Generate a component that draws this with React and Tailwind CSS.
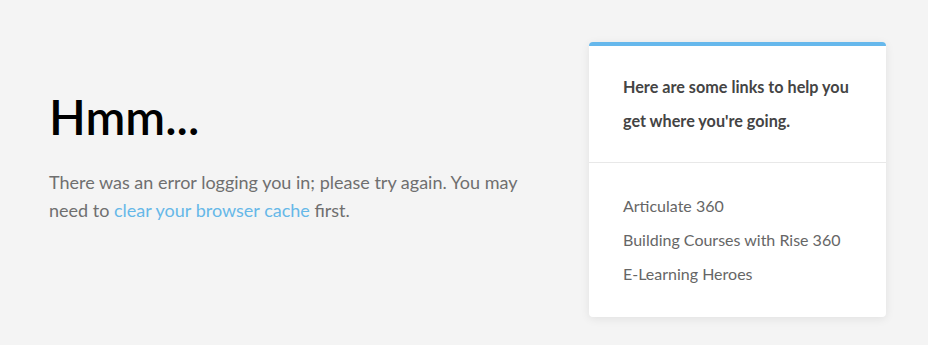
export default function App() {
  return (
    <div className="min-h-[345px] bg-[#f4f4f4] font-['Lato',_'Liberation_Sans',_sans-serif] flex items-start pl-[49px] pr-[42px] pt-[42px]">
      <div className="flex-1 pt-[46px]">
        <h1 className="text-[48px] leading-[1.2] font-semibold text-black mb-[22px]">Hmm...</h1>
        <p className="w-[480px] text-[18px] leading-[28px] text-[#6f6f6f]">
          There was an error logging you in; please try again. You may need to{" "}
          <a href="#" className="text-[#66b8e8]">clear your browser cache</a> first.
        </p>
      </div>
      <div className="w-[297px] bg-white rounded-[4px] border-t-4 border-[#66b8ec] shadow-[0_2px_10px_rgba(0,0,0,0.08)]">
        <div className="pl-[34px] pr-[24px] pt-[24px] pb-[24px] border-b border-[#e8e8e8]">
          <h2 className="text-[16.2px] leading-[34px] font-bold text-[#444]">
            Here are some links to help you get where you're going.
          </h2>
        </div>
        <ul className="px-[34px] pt-[26px] pb-[26px] text-[16px] leading-[34px] text-[#666]">
          <li><a href="#">Articulate 360</a></li>
          <li><a href="#">Building Courses with Rise 360</a></li>
          <li><a href="#">E-Learning Heroes</a></li>
        </ul>
      </div>
    </div>
  );
}
